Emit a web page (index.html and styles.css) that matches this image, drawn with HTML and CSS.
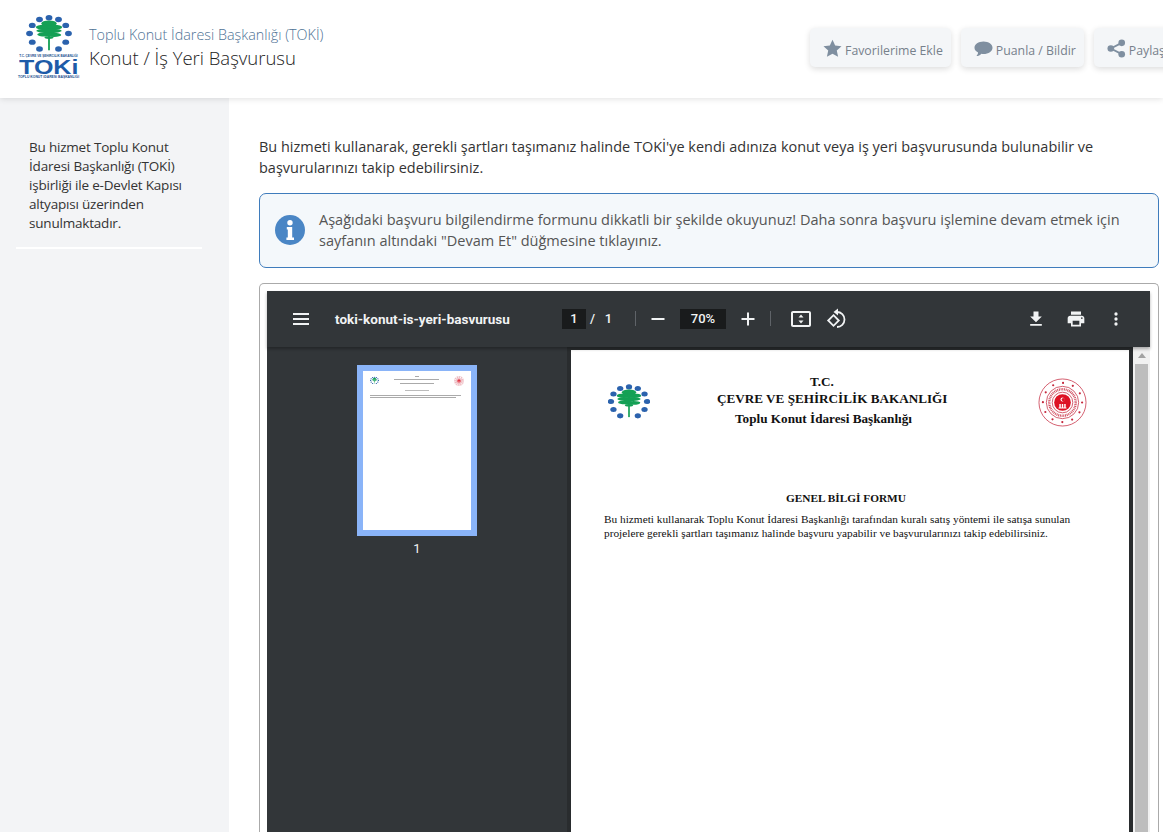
FILE: index.html
```html
<!DOCTYPE html>
<html lang="tr">
<head>
<meta charset="utf-8">
<title>Konut / İş Yeri Başvurusu</title>
<link rel="stylesheet" href="styles.css">
</head>
<body>
<svg class="defs" width="0" height="0" aria-hidden="true">
  <defs>
    <g id="tree" fill="#14a055">
      <rect x="48" y="40" width="4" height="38"/>
      <ellipse cx="50" cy="19" rx="17" ry="7"/>
      <ellipse cx="38" cy="27" rx="17" ry="5.500"/>
      <ellipse cx="62" cy="27" rx="17" ry="5.500"/>
      <ellipse cx="50" cy="35" rx="28" ry="5"/>
      <ellipse cx="41" cy="43" rx="17" ry="4.500"/>
      <ellipse cx="61" cy="44" rx="16" ry="4.500"/>
      <ellipse cx="50" cy="50" rx="10" ry="3"/>
    </g>
    <g id="dots" fill="#2b62ad">
      <ellipse cx="50" cy="6" rx="7.500" ry="6"/><ellipse cx="29" cy="10" rx="7.500" ry="6"/><ellipse cx="71" cy="10" rx="7.500" ry="6"/>
      <ellipse cx="13" cy="23" rx="7.500" ry="6"/><ellipse cx="87" cy="23" rx="7.500" ry="6"/><ellipse cx="7" cy="41" rx="7.500" ry="6"/>
      <ellipse cx="93" cy="41" rx="7.500" ry="6"/><ellipse cx="13" cy="60" rx="7.500" ry="6"/><ellipse cx="87" cy="60" rx="7.500" ry="6"/>
      <ellipse cx="29" cy="75" rx="7.500" ry="6"/><ellipse cx="71" cy="75" rx="7.500" ry="6"/>
    </g>
    <g id="seal">
      <circle cx="50" cy="50" r="48" fill="#fff" stroke="#c5283d" stroke-width="1.500"/>
      <circle cx="50" cy="50" r="40" fill="none" stroke="#c5283d" stroke-width="4.500" stroke-linecap="round" stroke-dasharray="0 20.940"/>
      <circle cx="50" cy="50" r="33" fill="none" stroke="#c5283d" stroke-width="1.500"/>
      <circle cx="50" cy="50" r="27" fill="none" stroke="#c5283d" stroke-width="5" stroke-dasharray="2 1.500" opacity=".8"/>
      <circle cx="50" cy="50" r="21" fill="none" stroke="#c5283d" stroke-width="1.500"/>
      <circle cx="50" cy="50" r="17" fill="#dd1224"/>
      <path d="M42 62h16v-2h-1.500v-7h-3v7h-2v-7h-3v7h-2v-7h-3v7H42z" fill="#fff"/>
      <circle cx="50" cy="44" r="4" fill="#fff"/>
      <circle cx="51.500" cy="44" r="3.200" fill="#dd1224"/>
    </g>
  </defs>
</svg>

<header class="topbar">
  <div class="brand">
    <div class="logo">
      <svg class="logo-mark" viewBox="0 0 100 84"><use href="#dots"/><use href="#tree"/></svg>
      <span class="logo-tiny">T.C. ÇEVRE VE ŞEHİRCİLİK BAKANLIĞI</span>
      <span class="logo-name">TOKi</span>
      <span class="logo-tiny logo-tiny-b">TOPLU KONUT İDARESİ BAŞKANLIĞI</span>
    </div>
    <div class="titles">
      <div class="org">Toplu Konut İdaresi Başkanlığı (TOKİ)</div>
      <h1 class="title">Konut / İş Yeri Başvurusu</h1>
    </div>
  </div>
  <div class="actions">
    <a class="action">
      <svg class="action-icon" viewBox="0 0 20 20"><path d="M10 .8l2.800 6.100 6.700.7-5 4.500 1.400 6.600L10 15.400l-5.900 3.300 1.400-6.600-5-4.500 6.700-.7z"/></svg>
      Favorilerime Ekle
    </a>
    <a class="action">
      <svg class="action-icon" viewBox="0 0 20 20"><path d="M10 2.500c5.300 0 9.500 2.900 9.500 6.600s-4.200 6.600-9.500 6.600c-.8 0-1.500-.1-2.200-.2C6.500 17 4.500 18 2.400 18c1-1 1.700-2.200 1.900-3.900C2 12.900.5 11.100.5 9.100.5 5.400 4.700 2.500 10 2.500z"/></svg>
      Puanla / Bildir
    </a>
    <a class="action">
      <svg class="action-icon" viewBox="0 0 20 20"><circle cx="15.500" cy="4" r="3.500"/><circle cx="15.500" cy="16" r="3.500"/><circle cx="4" cy="10" r="3.500"/><path d="M4 10l11.500-6M4 10l11.500 6" stroke="#7f8fa0" stroke-width="2" fill="none"/></svg>
      Paylaş
    </a>
  </div>
</header>

<div class="layout">
  <aside class="sidebar">
    <p class="side-note">Bu hizmet Toplu Konut İdaresi Başkanlığı (TOKİ) işbirliği ile e-Devlet Kapısı altyapısı üzerinden sunulmaktadır.</p>
  </aside>
  <main class="content">
    <p class="intro">Bu hizmeti kullanarak, gerekli şartları taşımanız halinde TOKİ'ye kendi adınıza konut veya iş yeri başvurusunda bulunabilir ve başvurularınızı takip edebilirsiniz.</p>
    <div class="notice">
      <svg class="notice-icon" viewBox="0 0 30 30"><circle cx="15" cy="15" r="15" fill="#4a86c5"/><circle cx="15" cy="7.800" r="2.700" fill="#fff"/><path d="M11.800 12h5.400v10.500h1.800V25h-7.600v-2.500h1.400v-8h-1z" fill="#fff"/></svg>
      <p class="notice-text">Aşağıdaki başvuru bilgilendirme formunu dikkatli bir şekilde okuyunuz! Daha sonra başvuru işlemine devam etmek için sayfanın altındaki "Devam Et" düğmesine tıklayınız.</p>
    </div>
    <section class="frame">
      <div class="viewer">
        <div class="toolbar">
          <div class="tb-left">
            <svg class="tb-icon" viewBox="0 0 24 24"><path d="M4 6h16v2H4zM4 11h16v2H4zM4 16h16v2H4z"/></svg>
            <span class="doc-name">toki-konut-is-yeri-basvurusu</span>
          </div>
          <div class="tb-mid">
            <span class="field field-page">1</span>
            <span class="page-of">/&nbsp;&nbsp;&nbsp;1</span>
            <span class="sep sep-a"></span>
            <svg class="tb-icon" viewBox="0 0 24 24"><path d="M5.500 11h13v2h-13z"/></svg>
            <span class="field field-zoom">70%</span>
            <svg class="tb-icon" viewBox="0 0 24 24"><path d="M11 5.500h2V11h5.500v2H13v5.500h-2V13H5.500v-2H11z"/></svg>
            <span class="sep sep-b"></span>
            <svg class="tb-icon" viewBox="0 0 24 24"><path d="M20 4H4c-1.100 0-2 .9-2 2v12c0 1.100.9 2 2 2h16c1.100 0 2-.9 2-2V6c0-1.100-.9-2-2-2zm0 14H4V6h16zM12 7.500l-2.500 3h5zm0 9l2.500-3h-5z"/></svg>
            <svg class="tb-icon tb-rotate" viewBox="0 0 24 24"><path d="M13 1.500L8.500 5 13 8.500z"/><path class="rot-line" d="M12 5a7.500 7.500 0 0 1 0 15"/><path class="rot-line" d="M8.500 8.200L13.800 13.500 8.500 18.800 3.200 13.500z"/></svg>
          </div>
          <div class="tb-right">
            <svg class="tb-icon tb-icon-sm" viewBox="0 0 24 24"><path d="M19 9h-4V3H9v6H5l7 7zM5 18v2h14v-2z"/></svg>
            <svg class="tb-icon tb-icon-sm" viewBox="0 0 24 24"><path d="M19 8H5c-1.700 0-3 1.300-3 3v6h4v4h12v-4h4v-6c0-1.700-1.300-3-3-3zm-3 11H8v-5h8zm3-7c-.6 0-1-.4-1-1s.4-1 1-1 1 .4 1 1-.4 1-1 1zM18 3H6v4h12z"/></svg>
            <svg class="tb-icon tb-icon-sm" viewBox="0 0 24 24"><circle cx="12" cy="6" r="2"/><circle cx="12" cy="12" r="2"/><circle cx="12" cy="18" r="2"/></svg>
          </div>
        </div>
        <div class="viewer-body">
          <div class="thumbs">
            <div class="thumb">
              <div class="thumb-page">
                <div class="thumb-head">
                  <svg class="thumb-logo" viewBox="0 0 100 84"><use href="#dots"/><use href="#tree"/></svg>
                  <div class="thumb-lines"><i class="tl tl-a"></i><i class="tl tl-b"></i><i class="tl tl-c"></i></div>
                  <svg class="thumb-seal" viewBox="0 0 100 100"><use href="#seal"/></svg>
                </div>
                <i class="tl tl-d"></i>
                <i class="tl tl-e"></i>
                <i class="tl tl-f"></i>
              </div>
            </div>
            <div class="thumb-num">1</div>
          </div>
          <div class="pages">
            <article class="page">
              <div class="page-head">
                <svg class="page-logo" viewBox="0 0 100 84"><use href="#dots"/><use href="#tree"/></svg>
                <div class="page-org">
                  <div class="page-org-tc">T.C.</div>
                  <div>ÇEVRE VE ŞEHİRCİLİK BAKANLIĞI</div>
                  <div class="page-org-sub">Toplu Konut İdaresi Başkanlığı</div>
                </div>
                <svg class="page-seal" viewBox="0 0 100 100"><use href="#seal"/></svg>
              </div>
              <h2 class="page-title">GENEL BİLGİ FORMU</h2>
              <p class="page-text">Bu hizmeti kullanarak Toplu Konut İdaresi Başkanlığı tarafından kuralı satış yöntemi ile satışa sunulan projelere gerekli şartları taşımanız halinde başvuru yapabilir ve başvurularınızı takip edebilirsiniz.</p>
            </article>
            <div class="scrollbar"><span class="scroll-arrow"></span><span class="scroll-thumb"></span></div>
          </div>
        </div>
      </div>
    </section>
  </main>
</div>
</body>
</html>
```

FILE: styles.css
```css
* { box-sizing: border-box; }
html, body { height: 832px; overflow: hidden; }
body { margin: 0; font-family: "Open Sans", sans-serif; color: #2c3e50; background: #fff; display: flex; flex-direction: column; }
p, h1, h2 { margin: 0; font-weight: 400; }
.defs { position: absolute; }

.topbar { flex: none; height: 98px; display: flex; justify-content: space-between; background: #fff; box-shadow: 0 1px 6px rgba(0,0,0,.12); position: relative; z-index: 2; overflow: hidden; }
.brand { display: flex; align-items: flex-start; padding: 15px 0 0 18px; }
.logo { width: 61px; display: flex; flex-direction: column; align-items: center; }
.logo-mark { width: 46px; height: 38px; margin-bottom: 1px; }
.logo-name { font: 700 20px/16px "Liberation Sans", sans-serif; color: #1d5ba8; transform: scaleX(1.25); }
.logo-tiny { font: 700 3.100px/5px "Liberation Sans", sans-serif; color: #1d4f8f; white-space: nowrap; }
.logo-tiny-b { font-size: 3.400px; }
.titles { margin-left: 10px; padding-top: 10px; }
.org { font-size: 14.350px; line-height: 20px; font-weight: 300; color: #4f7395; }
.title { font-size: 18.500px; line-height: 28px; font-weight: 300; color: #222; margin-top: -1px; }

.actions { display: flex; gap: 10px; padding: 28px 0 0; margin-right: -10px; flex: none; align-items: flex-start; }
.action { height: 39px; display: flex; align-items: center; gap: 3px; padding: 5px 8px 0 13px; background: #f4f6f8; border-radius: 5px; box-shadow: 0 2px 6px rgba(0,0,0,.14); font-size: 12.300px; color: #77818c; white-space: nowrap; }
.action-icon { width: 19px; height: 19px; fill: #7f8fa0; flex: none; margin-top: -3px; }

.layout { flex: 1; display: flex; min-height: 0; }
.sidebar { flex: none; width: 229px; background: #f3f4f6; padding: 40px 27px 0 16px; }
.side-note { font-size: 13.500px; line-height: 19px; color: #333; padding: 0 0 14px 13px; border-bottom: 2px solid #fff; letter-spacing: -.2px; width: 186px; }

.content { flex: 1; min-width: 0; padding: 38.300px 4px 0 30px; display: flex; flex-direction: column; }
.intro { font-size: 14.470px; line-height: 21px; color: #333; }
.notice { margin-top: 14.700px; height: 75px; flex: none; display: flex; align-items: center; gap: 14px; padding: 0 30px 0 15px; background: #f4f8fb; border: 1px solid #3f7cbc; border-radius: 7px; }
.notice-icon { width: 30px; height: 30px; flex: none; }
.notice-text { font-size: 14.520px; line-height: 21.600px; color: #555; }

.frame { margin-top: 15px; flex: 1; min-height: 0; padding: 7px 8px 0 7px; border: 1px solid #aaa; border-bottom: 0; border-radius: 5px 5px 0 0; overflow: hidden; }
.viewer { height: 100%; background: #323639; display: flex; flex-direction: column; }

.toolbar { flex: none; height: 56px; display: flex; align-items: center; position: relative; color: #f1f3f4; background: #323639; box-shadow: 0 2px 3px rgba(0,0,0,.3); z-index: 1; }
.tb-icon { width: 24px; height: 24px; fill: #f1f3f4; flex: none; }
.tb-icon-sm { width: 20px; height: 20px; }
.rot-line { fill: none; stroke: #f1f3f4; stroke-width: 1.800; }
.tb-left { width: 295px; display: flex; align-items: center; gap: 22px; padding-left: 22px; flex: none; }
.doc-name { font: 700 13.500px/20px Roboto, sans-serif; }
.tb-mid { display: flex; align-items: center; flex: none; font: 500 13px/20px Roboto, sans-serif; }
.field { background: #191b1c; height: 20px; display: flex; align-items: center; justify-content: center; }
.field-page { width: 24px; }
.field-zoom { width: 46px; margin: 0 10px; }
.page-of { margin-left: 4px; width: 45px; white-space: nowrap; }
.sep { width: 1px; height: 15px; background: #5f6368; flex: none; }
.sep-a { margin-right: 10px; }
.sep-b { margin: 0 18px 0 10px; }
.tb-rotate { margin-left: 12px; }
.tb-right { margin-left: auto; display: flex; gap: 20px; padding-right: 24px; }

.viewer-body { flex: 1; min-height: 0; display: flex; }
.thumbs { flex: none; width: 300px; display: flex; flex-direction: column; align-items: center; padding-top: 18px; }
.thumb { width: 120px; height: 171px; border: 6px solid #8ab4f8; background: #fff; }
.thumb-page { padding: 5px 7px; height: 100%; display: flex; flex-direction: column; }
.thumb-head { display: flex; justify-content: space-between; align-items: flex-start; }
.thumb-logo { width: 9px; height: 9px; }
.thumb-seal { width: 10px; height: 10px; }
.thumb-lines { display: flex; flex-direction: column; align-items: center; gap: 2px; }
.tl { display: block; height: 1px; background: #aaa; }
.tl-a { width: 4px; }
.tl-b { width: 45px; }
.tl-c { width: 34px; margin-top: 1px; }
.tl-d { width: 24px; margin: 4px auto 4px; background: #bbb; }
.tl-e { width: 91px; }
.tl-f { width: 86px; margin-top: 1px; }
.thumb-num { margin-top: 5px; font: 400 13px/16px Roboto, sans-serif; color: #f1f3f4; }

.pages { flex: 1; min-width: 0; display: flex; gap: 4px; padding-left: 4px; background: #292c2e; }
.page { flex: 1; min-width: 0; margin-top: 3px; background: #fff; padding: 23px 33px 0; font-family: "Liberation Serif", serif; color: #111; }
.page-head { display: flex; align-items: flex-start; }
.page-logo { width: 42px; height: 38px; margin: 10px 0 0 4px; flex: none; }
.page-org { flex: none; margin-left: 67px; font-weight: 700; font-size: 13.170px; line-height: 17px; }
.page-org-tc { padding-left: 93px; }
.page-org-sub { font-size: 13.200px; line-height: 16px; margin-top: 4px; padding-left: 18px; }
.page-seal { width: 49px; height: 49px; margin: 5px 9px 0 auto; flex: none; }
.page-title { font-size: 11.300px; line-height: 14px; font-weight: 700; text-align: center; margin-top: 64px; padding-right: 8px; }
.page-text { font-size: 11.320px; line-height: 14px; margin-top: 7px; padding-right: 20px; }

.scrollbar { flex: none; width: 17px; background: #f1f1f1; display: flex; flex-direction: column; align-items: center; }
.scroll-arrow { margin-top: 6px; border: 4px solid transparent; border-top: 0; border-bottom: 5px solid #a3a3a3; }
.scroll-thumb { flex: 1; width: 13px; margin-top: 6px; background: #bdbdbd; }
```
